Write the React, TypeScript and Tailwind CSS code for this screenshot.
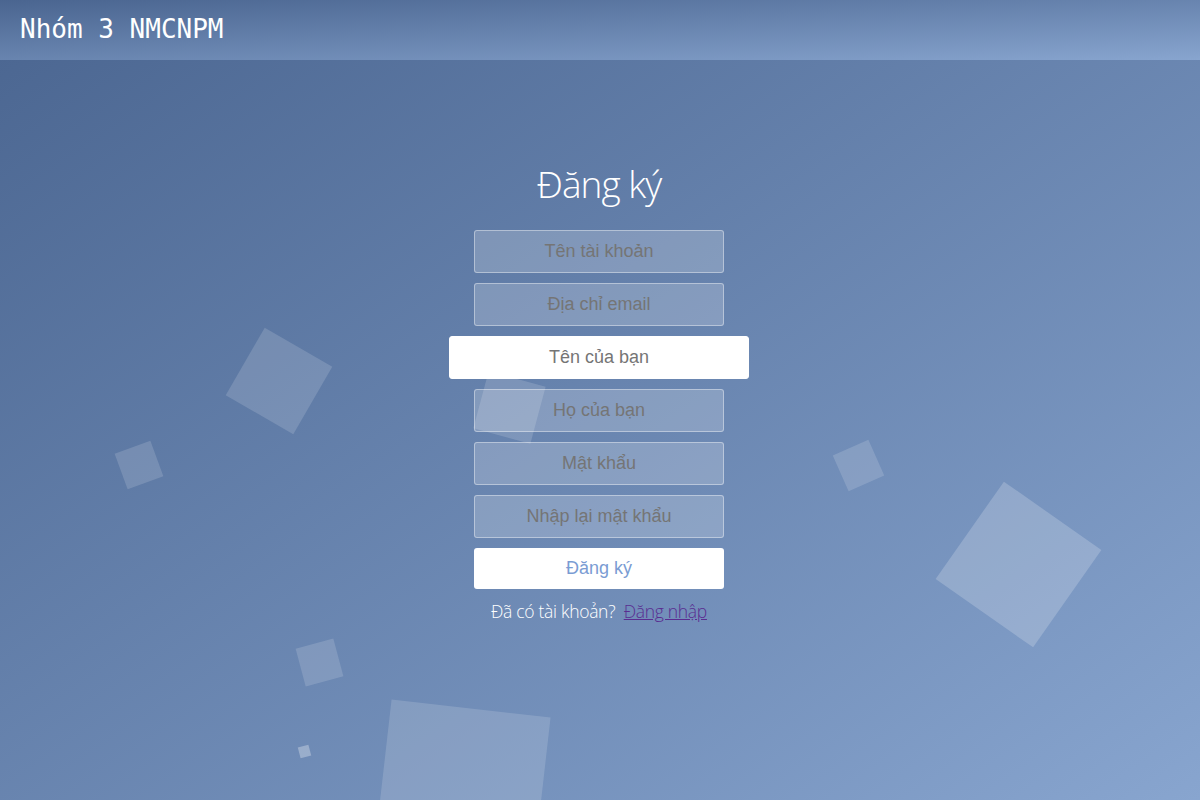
import { useState } from 'react';

const bubbles = [
  { cx: 279, cy: 381, size: 78, rot: 30, cls: 'bg-white/15' },
  { cx: 139, cy: 465, size: 38, rot: -20, cls: 'bg-white/15' },
  { cx: 509, cy: 407, size: 59, rot: 15, cls: 'bg-white/15' },
  { cx: 858, cy: 465, size: 39, rot: -24, cls: 'bg-white/15' },
  { cx: 1018, cy: 564, size: 119, rot: 35, cls: 'bg-white/20' },
  { cx: 319, cy: 662, size: 39, rot: -15, cls: 'bg-white/15' },
  { cx: 304, cy: 751, size: 11, rot: -15, cls: 'bg-white/30' },
  { cx: 462, cy: 788, size: 160, rot: 6.5, cls: 'bg-white/15' },
];

const fields = [
  { name: 'username', placeholder: 'Tên tài khoản', type: 'text' },
  { name: 'email', placeholder: 'Địa chỉ email', type: 'email' },
  { name: 'firstName', placeholder: 'Tên của bạn', type: 'text' },
  { name: 'lastName', placeholder: 'Họ của bạn', type: 'text' },
  { name: 'password', placeholder: 'Mật khẩu', type: 'password' },
  { name: 'confirm', placeholder: 'Nhập lại mật khẩu', type: 'password' },
];

export default function App() {
  const [focused, setFocused] = useState('firstName');

  return (
    <div className="relative min-h-screen w-full overflow-hidden bg-gradient-to-br from-[#4a6590] to-[#88a5cf]">
      {/* floating squares */}
      {bubbles.map((b, i) => (
        <div
          key={i}
          className={`absolute ${b.cls}`}
          style={{
            left: b.cx - b.size / 2,
            top: b.cy - b.size / 2,
            width: b.size,
            height: b.size,
            transform: `rotate(${b.rot}deg)`,
          }}
        />
      ))}

      <header className="relative h-[60px] flex items-center px-5 bg-gradient-to-br from-[#4a6590] to-[#88a5cf]">
        <span className="text-white text-[26px] font-['DejaVu_Sans_Mono',monospace] -mt-[2px]">Nhóm 3 NMCNPM</span>
      </header>

      <main className="relative flex flex-col items-center pt-[100px] pr-[2px]">
        <h1 className="text-white text-[37px] leading-[54px] font-light font-['Open_Sans',sans-serif] tracking-[-1px] -mt-[3px] mb-[3px]">
          Đăng ký
        </h1>

        <form className="flex flex-col items-center gap-[10px] mt-[16px]" onSubmit={e => e.preventDefault()}>
          {fields.map(f => (
            <input
              key={f.name}
              type={f.type}
              placeholder={f.placeholder}
              onFocus={() => setFocused(f.name)}
              className={`h-[43px] rounded-[3px] border text-center text-[18px] font-['Liberation_Sans',Arial,sans-serif] placeholder:text-[#757575] outline-none ${
                focused === f.name
                  ? 'w-[300px] bg-white border-white text-[#7a9cd3]'
                  : 'w-[250px] bg-white/20 border-white/40 text-white'
              }`}
            />
          ))}
          <button
            type="submit"
            className="w-[250px] h-[41px] rounded-[3px] bg-white text-[#7a9cd3] text-[18px] font-['Liberation_Sans',Arial,sans-serif]"
          >
            Đăng ký
          </button>
        </form>

        <p className="mt-[9px] text-white text-[17.5px] font-light font-['Open_Sans',sans-serif] tracking-[-0.3px]">
          Đã có tài khoản?&nbsp;&nbsp;
          <a href="#" className="text-[#5a2d91] underline">Đăng nhập</a>
        </p>
      </main>
    </div>
  );
}
